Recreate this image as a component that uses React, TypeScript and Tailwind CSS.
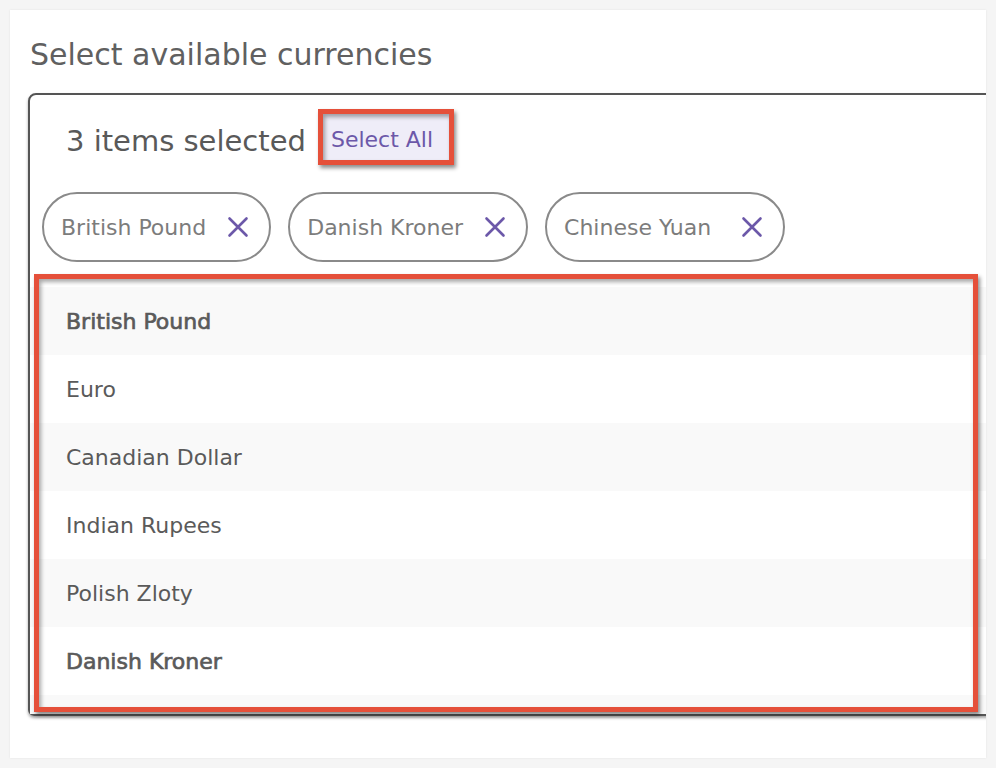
import React from "react";

const XIcon = () => (
  <svg width="22" height="22" viewBox="0 0 22 22" fill="none" className="shrink-0">
    <path d="M2.5 2.5 L19.5 19.5 M19.5 2.5 L2.5 19.5" stroke="#6c58a9" strokeWidth="2.6" strokeLinecap="round" />
  </svg>
);

const Chip = ({ label, wide }: { label: string; wide?: boolean }) => (
  <div
    className={`flex items-center h-[70px] border-2 border-[#8a8a8a] rounded-full pl-[17px] pr-[20px] ${
      wide ? "gap-[30px]" : "gap-[21px]"
    }`}
  >
    <span className="text-[22px] text-[#7c7c7c] whitespace-nowrap">{label}</span>
    <XIcon />
  </div>
);

const rows: { name: string; bold?: boolean }[] = [
  { name: "British Pound", bold: true },
  { name: "Euro" },
  { name: "Canadian Dollar" },
  { name: "Indian Rupees" },
  { name: "Polish Zloty" },
  { name: "Danish Kroner", bold: true },
];

export default function App() {
  return (
    <div
      className="min-h-screen bg-[#f5f5f5] p-[10px]"
      style={{ fontFamily: "'DejaVu Sans', 'Open Sans', sans-serif" }}
    >
      <div className="bg-white h-[748px] w-[976px] overflow-hidden shadow-[0_0_2px_rgba(0,0,0,0.08)] pl-[18px] pt-[27px]">
        <h1 className="text-[30px] leading-[36px] text-[#606060] pl-[2px] whitespace-nowrap">Select available currencies</h1>
        <div className="mt-[20px] relative border-2 border-[#555555] rounded-tl-[8px] rounded-bl-[6px] w-[1000px] shadow-[0_2px_3px_rgba(0,0,0,0.35)]">
          <div className="flex items-center h-[88px] pl-[36px]">
            <span className="text-[29px] text-[#595959] whitespace-nowrap mt-[5px]">3 items selected</span>
            <span className="ml-[12px] mb-[5px] flex items-center h-[56px] border-[5px] border-[#e5503a] bg-[#efedf8] pl-[8px] pr-[16px] pt-[6px] text-[22px] text-[#6c58a9] whitespace-nowrap shadow-[2px_3px_4px_rgba(0,0,0,0.45),inset_2px_3px_4px_rgba(0,0,0,0.35)]">
              Select All
            </span>
          </div>
          <div className="flex gap-[17px] pl-[12px] mt-[9px]">
            <Chip label="British Pound" />
            <Chip label="Danish Kroner" />
            <Chip label="Chinese Yuan" wide />
          </div>
          <div className="mt-[25px] h-[427px] overflow-hidden">
            {rows.map((r, i) => (
              <div
                key={r.name}
                className={`h-[68px] flex items-center pl-[36px] text-[22px] text-[#5a5a5a] whitespace-nowrap ${
                  i % 2 === 0 ? "bg-[#f9f9f9]" : "bg-white"
                } ${r.bold ? "[-webkit-text-stroke:0.7px_#5a5a5a]" : ""}`}
              >
                {r.name}
              </div>
            ))}
            <div className="h-[68px] bg-[#f9f9f9]" />
          </div>
          <div className="absolute left-[4px] top-[179px] w-[944px] h-[438px] border-[5px] border-[#e5503a] shadow-[2px_3px_4px_rgba(0,0,0,0.45),inset_2px_3px_4px_rgba(0,0,0,0.35)] pointer-events-none" />
        </div>
      </div>
    </div>
  );
}
